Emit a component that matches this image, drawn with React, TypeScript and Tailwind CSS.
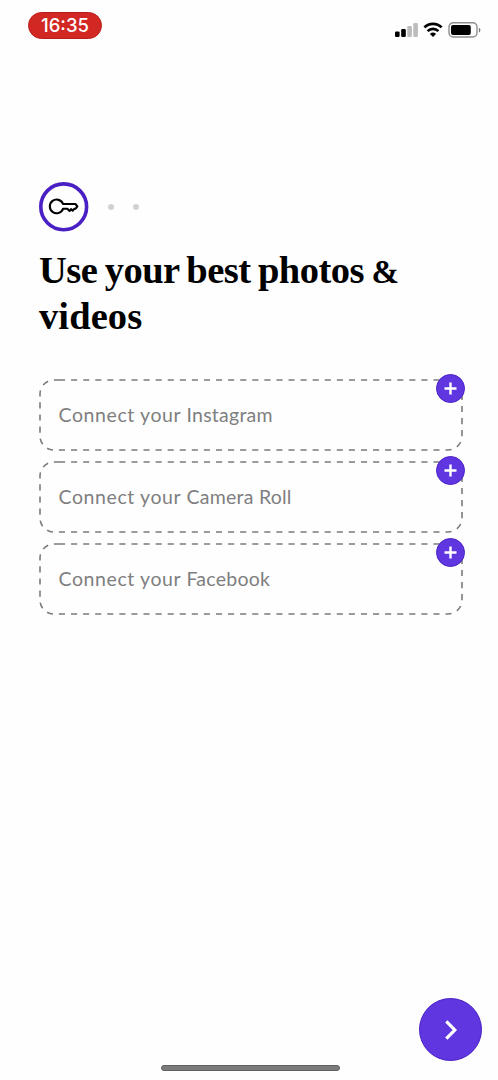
import React from 'react';

const SOURCES = [
    { id: 'instagram', name: 'Instagram' },
    { id: 'camera', name: 'Camera Roll' },
    { id: 'facebook', name: 'Facebook' },
];

const StatusBar: React.FC = () => (
    <header className="flex items-start justify-between h-[182px] pl-7 pr-[17px] pt-3">
        <div className="w-[74px] h-[27px] rounded-full bg-[#d22823] border border-[#b81d1c] flex items-center justify-center text-white text-[18.5px] font-medium leading-none font-['Inter',sans-serif]">
            16:35
        </div>
        <svg className="mt-[9px]" width="87" height="18" viewBox="0 0 87 18">
            {/* signal */}
            <rect x="1" y="10.4" width="4.6" height="5.6" rx="1.2" fill="#000" />
            <rect x="7.2" y="8" width="4.6" height="8" rx="1.2" fill="#000" />
            <rect x="13.3" y="5" width="4.6" height="11" rx="1.2" fill="#bcbcbc" />
            <rect x="19.3" y="2" width="4.6" height="14" rx="1.2" fill="#bcbcbc" />
            {/* wifi */}
            <g fill="none" stroke="#000" strokeWidth="2.7">
                <path d="M30.4 6.4a12.2 12.2 0 0 1 17.2 0" />
                <path d="M33.6 10.1a7.7 7.7 0 0 1 10.8 0" />
            </g>
            <path d="M39 16l-3.1-3.1a4.5 4.5 0 0 1 6.2 0z" fill="#000" />
            {/* battery */}
            <rect x="55" y="1.8" width="28" height="14.2" rx="4.2" fill="none" stroke="#8d8d8d" strokeWidth="1.4" />
            <rect x="57" y="4" width="19.8" height="10" rx="2" fill="#000" />
            <path d="M84.9 6.8c2 .8 2 3.9 0 4.7z" fill="#777" />
        </svg>
    </header>
);

const SourceCard: React.FC<{ name: string }> = ({ name }) => (
    <button className="relative h-[72px] w-[424px] flex items-center pl-[19.5px] text-left">
        <svg className="absolute inset-0" width="424" height="72" viewBox="0 0 424 72" fill="none">
            <path
                d="M20 1H409A14 14 0 0 1 423 15V57A14 14 0 0 1 409 71H15A14 14 0 0 1 1 57V15A14 14 0 0 1 15 1Z"
                stroke="#7b7b7b"
                strokeWidth="1.6"
                strokeDasharray="6.1 5.98"
            />
        </svg>
        <span className="text-[19.5px] leading-6 text-[#7f7f80] whitespace-nowrap tracking-[0.25px] font-['Lato',sans-serif]">
            <span className="tracking-[0.6px]">Connect your </span>
            {name}
        </span>
        <span className="absolute -top-[5px] left-[397px] w-[29px] h-[29px] rounded-full bg-[#6036e0] border border-[#4b22c4] flex items-center justify-center">
            <svg width="13" height="13" viewBox="0 0 13 13" stroke="#fff" strokeWidth="2.4">
                <path d="M6.5 .5v12M.5 6.5h12" />
            </svg>
        </span>
    </button>
);

const App: React.FC = () => (
    <div className="w-full h-screen bg-[#fefefe] flex flex-col overflow-hidden">
        <StatusBar />

        <main className="pl-[39px] flex-1">
            {/* step indicator */}
            <div className="flex items-center h-[50px]">
                <svg width="50" height="50" viewBox="0 0 50 50" fill="none">
                    <circle cx="24.7" cy="24.8" r="22.9" stroke="#4a1fc4" strokeWidth="3.6" />
                    <path
                        d="M24 22A6.8 6.8 0 1 0 24 26.8H28.3L30.6 29 32 27.2 33.8 28.6 35.2 26.8H36.4L38.4 24.4 36.4 22Z"
                        stroke="#000"
                        strokeWidth="2.1"
                        strokeLinejoin="round"
                    />
                </svg>
                <span className="ml-[19px] w-1.5 h-1.5 rounded-full bg-[#d2d2d2]" />
                <span className="ml-[19px] w-1.5 h-1.5 rounded-full bg-[#d2d2d2]" />
            </div>

            <h1 className="mt-[15px] text-[38.5px] leading-[46px] font-bold text-black whitespace-nowrap tracking-[-0.5px] [word-spacing:-1.8px] font-['Liberation_Serif',serif]">
                Use your best photos <span className="text-[33px] leading-none">&amp;</span>
                <br />
                <span className="tracking-[0.1px]">videos</span>
            </h1>

            <div className="mt-10 flex flex-col gap-2.5">
                {SOURCES.map(s => (
                    <SourceCard key={s.id} name={s.name} />
                ))}
            </div>
        </main>

        <footer className="flex flex-col items-center pb-[9.5px]">
            <button className="self-end mr-4 w-[63px] h-[63px] rounded-full bg-[#6036e0] border border-[#4b22c4] flex items-center justify-center">
                <svg width="16" height="22" viewBox="0 0 16 22" fill="none" stroke="#fff" strokeWidth="3.2">
                    <path d="M3.3 2.3 11.8 11 3.3 19.7" />
                </svg>
            </button>
            <div className="mt-[3.5px] mr-[-3px] w-[179px] h-1.5 rounded-full bg-[#7b7b7b] border border-[#606060]" />
        </footer>
    </div>
);

export default App;
